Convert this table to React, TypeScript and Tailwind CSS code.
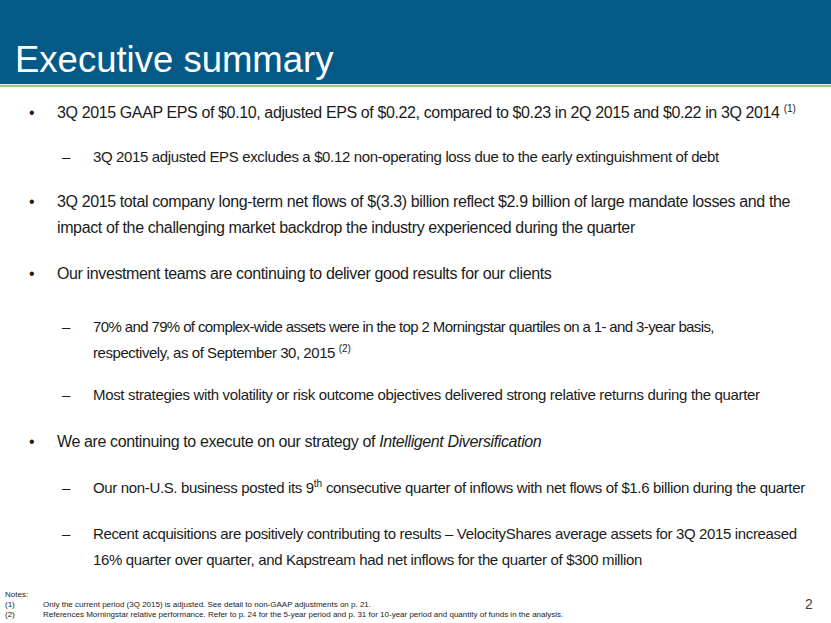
import type { ReactNode } from 'react';

const sans = { fontFamily: '"Liberation Sans", Arial, sans-serif' };

function Bullet({ children, className = '' }: { children: ReactNode; className?: string }) {
  return (
    <div className={`flex whitespace-nowrap text-[16px] tracking-[-0.38px] ${className}`}>
      <span className="w-[57px] shrink-0 pl-[29px]">•</span>
      <div className="flex-1">{children}</div>
    </div>
  );
}

function Sub({ children, className = '' }: { children: ReactNode; className?: string }) {
  return (
    <div className={`flex whitespace-nowrap text-[15px] ${className}`}>
      <span className="w-[93px] shrink-0 pl-[62px]">–</span>
      <div className="flex-1 flex flex-col">{children}</div>
    </div>
  );
}

function Sup({ children }: { children: ReactNode }) {
  return <span className="relative -top-[6px] text-[10px] leading-none tracking-normal">{children}</span>;
}

export default function App() {
  return (
    <div className="w-[831px] h-[623px] bg-white relative overflow-hidden" style={sans}>
      <header className="h-[84px] bg-[#035a86] flex items-end pb-[6px] pl-[15px]">
        <h1 className="text-white text-[36.5px] leading-none">Executive summary</h1>
      </header>
      <div className="h-[1px] bg-[#eef5e6]" />
      <div className="h-[2px] bg-[#9fc77a]" />

      <main className="leading-[26px] text-[#1b1b1b] pt-[13px]">
        <Bullet>
          3Q 2015 GAAP EPS of $0.10, adjusted EPS of $0.22, compared to $0.23 in 2Q 2015 and $0.22 in 3Q 2014 <Sup>(1)</Sup>
        </Bullet>
        <Sub className="mt-[18px]">
          <span className="tracking-[-0.36px]">
            3Q 2015 adjusted EPS excludes a $0.12 non-operating loss due to the early extinguishment of debt
          </span>
        </Sub>
        <Bullet className="mt-[19px]">
          3Q 2015 total company long-term net flows of $(3.3) billion reflect $2.9 billion of large mandate losses and the
          <br />
          impact of the challenging market backdrop the industry experienced during the quarter
        </Bullet>
        <Bullet className="mt-[20px]">
          Our investment teams are continuing to deliver good results for our clients
        </Bullet>
        <Sub className="mt-[27px]">
          <span className="tracking-[-0.62px]">
            70% and 79% of complex-wide assets were in the top 2 Morningstar quartiles on a 1- and 3-year basis,
          </span>
          <span className="tracking-[-0.45px]">
            respectively, as of September 30, 2015 <Sup>(2)</Sup>
          </span>
        </Sub>
        <Sub className="mt-[16px]">
          <span className="tracking-[-0.34px]">
            Most strategies with volatility or risk outcome objectives delivered strong relative returns during the quarter
          </span>
        </Sub>
        <Bullet className="mt-[21px]">
          We are continuing to execute on our strategy of <em>Intelligent Diversification</em>
        </Bullet>
        <Sub className="mt-[20px]">
          <span className="tracking-[-0.35px]">
            Our non-U.S. business posted its 9<Sup>th</Sup> consecutive quarter of inflows with net flows of $1.6 billion during the quarter
          </span>
        </Sub>
        <Sub className="mt-[20px]">
          <span className="tracking-[-0.35px]">
            Recent acquisitions are positively contributing to results – VelocityShares average assets for 3Q 2015 increased
          </span>
          <span className="tracking-[-0.35px]">
            16% quarter over quarter, and Kapstream had net inflows for the quarter of $300 million
          </span>
        </Sub>
      </main>

      <footer className="absolute left-[5px] top-[590px] text-[8px] leading-[10px] text-[#222] whitespace-nowrap">
        <div>Notes:</div>
        <div className="flex">
          <span className="w-[38px]">(1)</span>
          <span>Only the current period (3Q 2015) is adjusted. See detail to non-GAAP adjustments on p. 21.</span>
        </div>
        <div className="flex">
          <span className="w-[38px]">(2)</span>
          <span>References Morningstar relative performance. Refer to p. 24 for the 5-year period and p. 31 for 10-year period and quantity of funds in the analysis.</span>
        </div>
      </footer>
      <div className="absolute top-[597px] left-[805px] text-[14px] leading-none text-[#444]">2</div>
    </div>
  );
}
